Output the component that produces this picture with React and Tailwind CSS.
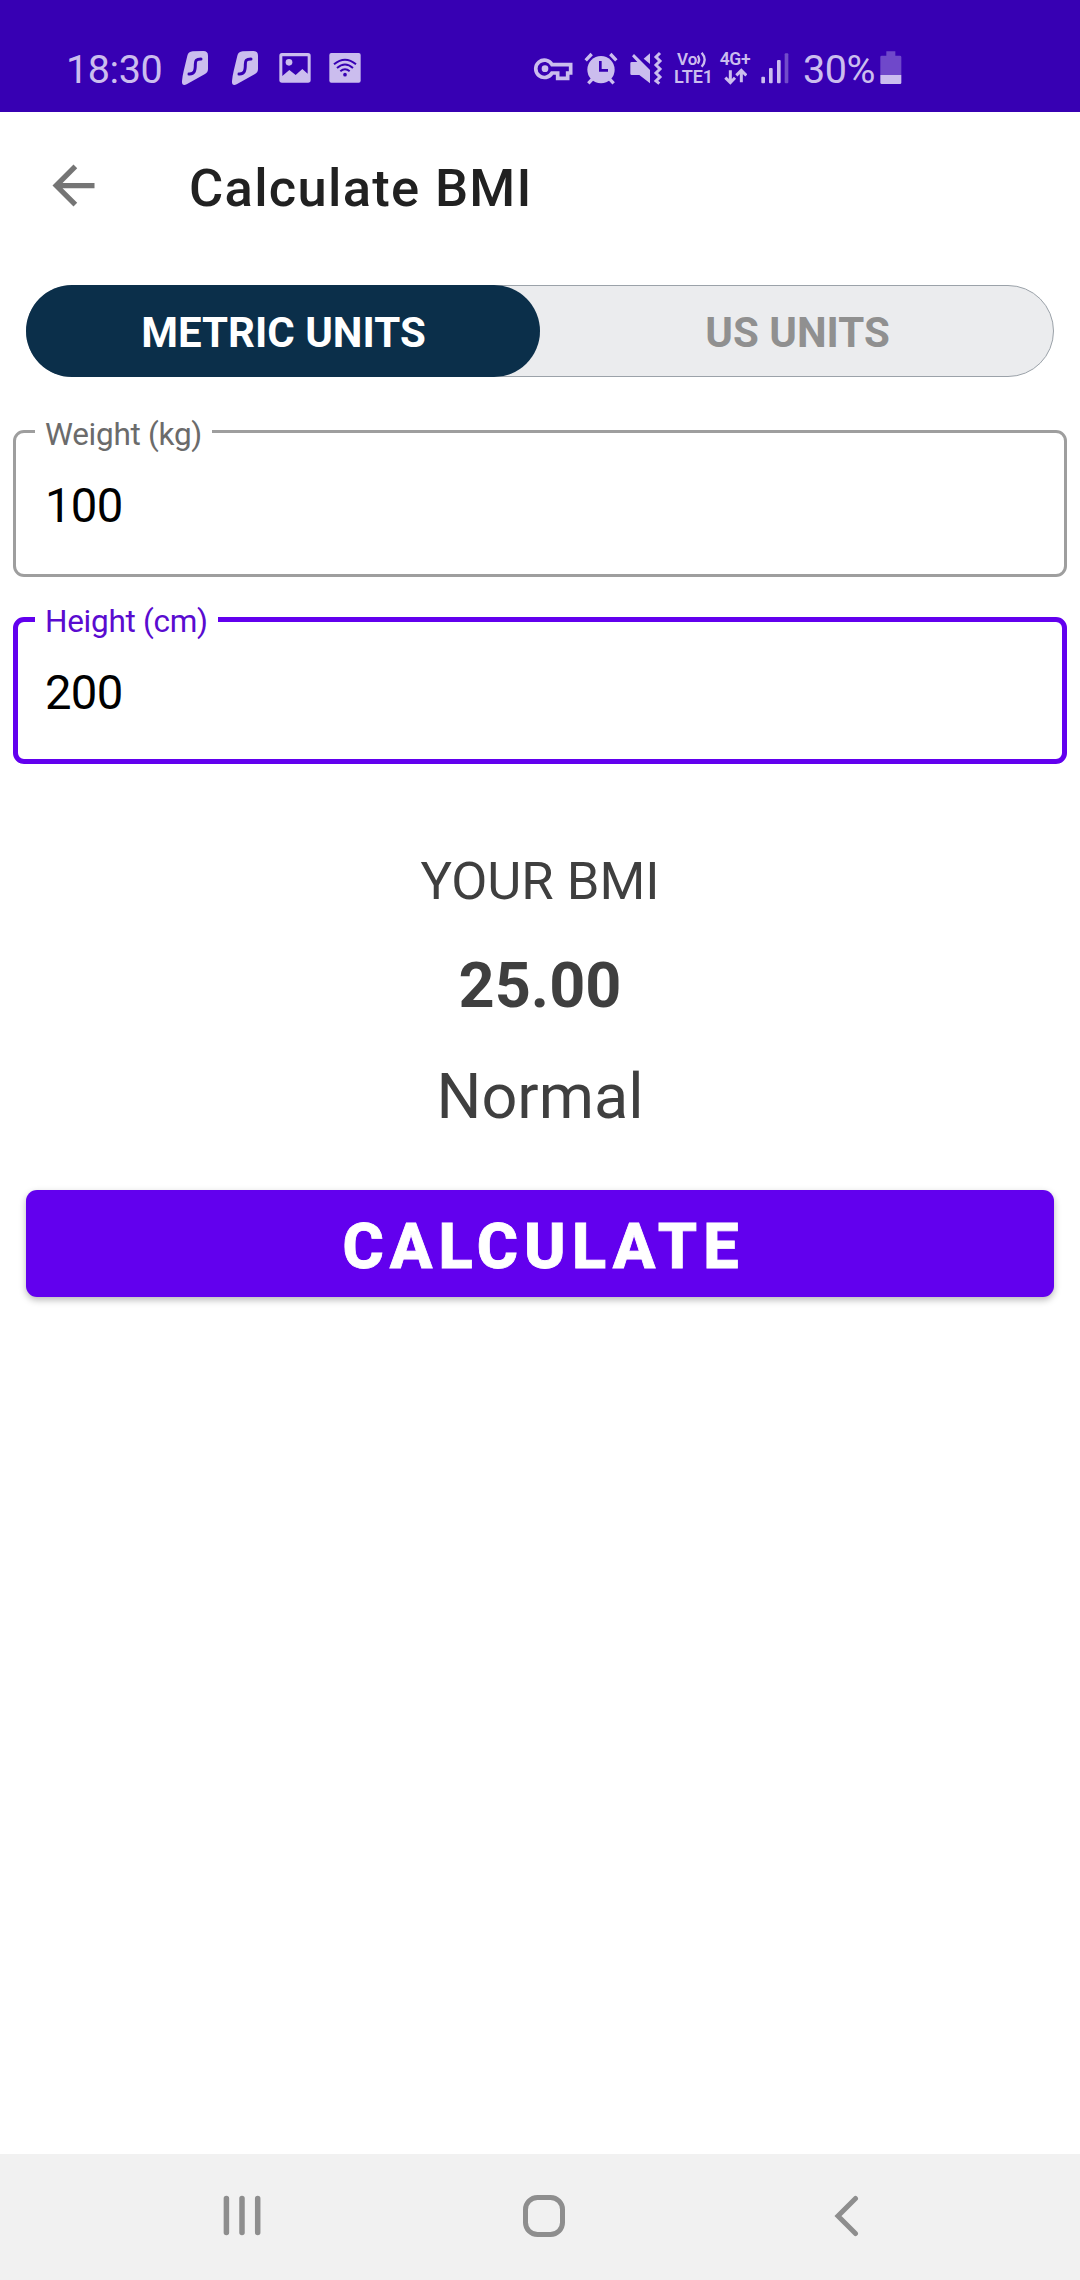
function SharkIcon() {
  return (
    <svg className="h-9 w-[30px] shrink-0" viewBox="390 60 90 108">
      <path
        fill="currentColor"
        d="M412 77Q415 65 428 64L460 63Q474 63 474 77L474 117Q474 127 465 132L410 163Q395 169 396 153Q397 140 401 123Z"
      />
      <path
        d="M453 87C438 87 436 92 436 103C436 123 433 133 417 132"
        fill="none"
        stroke="#3700b3"
        strokeWidth="9"
        strokeLinecap="round"
      />
    </svg>
  );
}

function PictureIcon() {
  return (
    <svg className="h-9 w-[34px] shrink-0" viewBox="684 60 102 108">
      <rect x="688" y="69" width="94" height="89" rx="8" fill="currentColor" />
      <path d="M697 79H773V131L757 117L737 135L718 120L697 138Z" fill="#3700b3" />
      <circle cx="717" cy="97" r="10" fill="currentColor" />
    </svg>
  );
}

function WifiIcon() {
  return (
    <svg className="h-9 w-[34px] shrink-0" viewBox="834 60 102 108">
      <rect x="838" y="69" width="94" height="89" rx="6" fill="currentColor" />
      <g fill="none" stroke="#3700b3" strokeWidth="6">
        <path d="M852 103Q885 75 918 103" />
        <path d="M861 114Q885 93 909 114" />
        <path d="M871 124Q885 112 899 124" />
      </g>
      <circle cx="885" cy="134" r="5.5" fill="#3700b3" />
    </svg>
  );
}

function KeyIcon() {
  return (
    <svg className="h-9 w-[41px] shrink-0" viewBox="36 60 123 108">
      <path
        d="M93 104A26 26 0 1 0 93 129H110V145H140V129H149V104Z"
        fill="none"
        stroke="currentColor"
        strokeWidth="11"
      />
      <circle cx="72" cy="116" r="10" fill="currentColor" />
    </svg>
  );
}

function AlarmIcon() {
  return (
    <svg className="h-9 w-[34px] shrink-0" viewBox="192 60 102 108">
      <circle cx="243" cy="119" r="41" fill="currentColor" />
      <g stroke="currentColor" strokeWidth="10" fill="none">
        <path d="M197 91L215 72M289 91L271 72M205 160L219 145M281 160L267 145" />
      </g>
      <path d="M241 93V121H264" fill="none" stroke="#3700b3" strokeWidth="8" />
    </svg>
  );
}

function MuteIcon() {
  return (
    <svg className="h-9 w-[34px] shrink-0" viewBox="327 60 102 108">
      <path d="M331 100Q331 96 335 96H352L336 79L342 72L390 120V160L358 135H335Q331 135 331 131Z" fill="currentColor" />
      <path d="M390 70V102L371 86Z" fill="currentColor" />
      <path
        d="M420 69L408 81L420 93L408 105L420 117L408 129L420 141L408 153L418 161"
        fill="none"
        stroke="currentColor"
        strokeWidth="9"
      />
    </svg>
  );
}

function VoLte() {
  return (
    <div className="flex w-[39px] shrink-0 flex-col text-[17px] font-semibold leading-[18px]">
      <div className="flex h-[18px] items-center pl-[3px]">
        <span>Vo</span>
        <svg className="h-[17px] w-[12px]" viewBox="0 0 36 51">
          <path
            d="M2 14Q11 26 2 38M14 5Q32 26 14 47"
            fill="none"
            stroke="currentColor"
            strokeWidth="7"
          />
        </svg>
      </div>
      <span className="text-[18px]">LTE1</span>
    </div>
  );
}

function MobileData() {
  return (
    <div className="flex w-[32px] shrink-0 flex-col items-center text-[17.5px] font-semibold leading-[17px]">
      <span className="tracking-[-0.3px]">4G+</span>
      <svg className="h-[17px] w-[23px]" viewBox="41 119 69 51">
        <path
          d="M60 126V162M45 148L60 163L74 148M93 162V127M78 141L93 126L108 141"
          fill="none"
          stroke="currentColor"
          strokeWidth="9"
        />
      </svg>
    </div>
  );
}

function SignalIcon() {
  return (
    <svg className="h-9 w-[28px] shrink-0" viewBox="155 60 84 108" fill="currentColor">
      <rect x="156" y="140" width="11" height="20" rx="3" />
      <rect x="179" y="114" width="11" height="46" rx="3" />
      <rect x="203" y="90" width="11" height="70" rx="3" />
      <rect x="226" y="70" width="11" height="90" rx="3" opacity="0.4" />
    </svg>
  );
}

function BatteryIcon() {
  return (
    <svg className="h-9 w-[22px] shrink-0" viewBox="512 60 66 108" fill="currentColor">
      <path d="M531 64H558V77H572Q576 77 576 81V135H513V81Q513 77 517 77H531Z" opacity="0.38" />
      <path d="M513 135H576V158Q576 162 572 162H517Q513 162 513 158Z" />
    </svg>
  );
}

function StatusBar() {
  return (
    <div className="flex h-28 items-start bg-[#3700b3] pl-[66px] pt-[50px] text-[#cbbdee]">
      <div className="flex h-9 w-[467px] items-center">
        <span className="w-[114px] pt-[3px] text-[39.5px] leading-9 tracking-[-0.4px]">18:30</span>
        <SharkIcon />
        <div className="ml-5 flex">
          <SharkIcon />
        </div>
        <div className="ml-[18px] flex gap-4">
          <PictureIcon />
          <WifiIcon />
        </div>
      </div>
      <div className="flex h-9 items-center">
        <KeyIcon />
        <div className="ml-[10px] flex gap-[11px]">
          <AlarmIcon />
          <MuteIcon />
        </div>
        <div className="ml-[11px] flex items-center gap-[6px]">
          <VoLte />
          <MobileData />
        </div>
        <div className="ml-[10px] flex">
          <SignalIcon />
        </div>
        <span className="ml-[14px] w-[77px] pt-[3px] text-[39.5px] leading-9 tracking-[-0.5px]">30%</span>
        <BatteryIcon />
      </div>
    </div>
  );
}

function Field({ label, value, active }) {
  return (
    <div
      className={
        active
          ? "relative flex h-[147px] items-center rounded-[11px] border-[5px] border-[#6200ee] pl-[27px]"
          : "relative flex h-[147px] items-center rounded-[11px] border-[3px] border-[#9e9e9e] pl-[29px]"
      }
    >
      <label
        className={
          active
            ? "absolute -top-[19px] left-[17px] w-[183px] bg-white pl-[10px] text-[31.5px] leading-[37px] tracking-[-0.28px] text-[#5a0bd0]"
            : "absolute -top-[17px] left-[19px] w-[177px] bg-white pl-[10px] text-[31.5px] leading-[37px] tracking-[-0.28px] text-[#6b6b6b]"
        }
      >
        {label}
      </label>
      <span className="pt-[4px] text-[47.25px] leading-[56px] tracking-[-0.7px] text-black">{value}</span>
    </div>
  );
}

function NavBar() {
  return (
    <div className="flex h-[126px] items-center bg-[#f1f1f1] pb-[2px] pl-[221px] text-[#8e8e8e]">
      <svg className="h-[42px] w-[42px]" viewBox="0 0 42 42" stroke="currentColor" strokeWidth="5.5" strokeLinecap="round">
        <path d="M5.4 3.5V37.5M21 3.5V37.5M36.7 3.5V37.5" />
      </svg>
      <svg className="ml-[260px] h-[42px] w-[42px]" viewBox="0 0 42 42" fill="none" stroke="currentColor" strokeWidth="5">
        <rect x="2.5" y="2.5" width="37" height="37" rx="12" />
      </svg>
      <svg className="ml-[268px] h-[42px] w-[30px]" viewBox="0 0 30 42" fill="none" stroke="currentColor" strokeWidth="5" strokeLinecap="round">
        <path d="M22.5 3.5L5 21L22.5 38.5" />
      </svg>
    </div>
  );
}

export default function App() {
  return (
    <div className="flex h-[2280px] w-[1080px] flex-col bg-white font-['Roboto',sans-serif]">
      <StatusBar />
      <header className="flex h-[147px] items-center pl-[42px]">
        <svg className="h-[63px] w-[63px]" viewBox="0 0 24 24" fill="#757575">
          <path d="M20 11H7.83l5.59-5.59L12 4l-8 8 8 8 1.41-1.41L7.83 13H20v-2z" />
        </svg>
        <h1 className="pl-[84px] pt-[4px] text-[52.5px] font-medium leading-[62px] tracking-[1.3px] text-[#212121]">
          Calculate BMI
        </h1>
      </header>
      <main className="flex flex-1 flex-col">
        <div className="mx-[26px] mt-[26px] flex h-[92px] rounded-full border border-[#9ba2a9] bg-[#ebecee] text-[42px] font-bold leading-[50px]">
          <button className="-my-px -ml-px flex w-[514px] items-center justify-center rounded-full bg-[#0b2f4a] pl-px pt-[3px] text-white">
            METRIC UNITS
          </button>
          <button className="flex flex-1 items-center justify-center pl-[2px] pt-[3px] text-[#909090]">US UNITS</button>
        </div>
        <div className="mx-[13px] mt-[53px] flex flex-col gap-10">
          <Field label="Weight (kg)" value="100" />
          <Field label="Height (cm)" value="200" active />
        </div>
        <div className="mt-[86px] flex flex-col items-center text-[#3f3f3f]">
          <p className="text-[52.5px] leading-[62px]">YOUR BMI</p>
          <p className="mt-[37px] text-[63px] font-bold leading-[74px]">25.00</p>
          <p className="mt-[37px] text-[63px] leading-[74px]">Normal</p>
        </div>
        <button className="mx-[26px] mt-[56px] flex h-[107px] items-center justify-center rounded-[11px] bg-[#6200ee] pl-[7px] pt-[6px] text-[63px] font-extrabold leading-[74px] tracking-[6.1px] text-white shadow-[0_3px_7px_rgba(0,0,0,0.28)] [-webkit-text-stroke:0.8px_white]">
          CALCULATE
        </button>
      </main>
      <NavBar />
    </div>
  );
}
